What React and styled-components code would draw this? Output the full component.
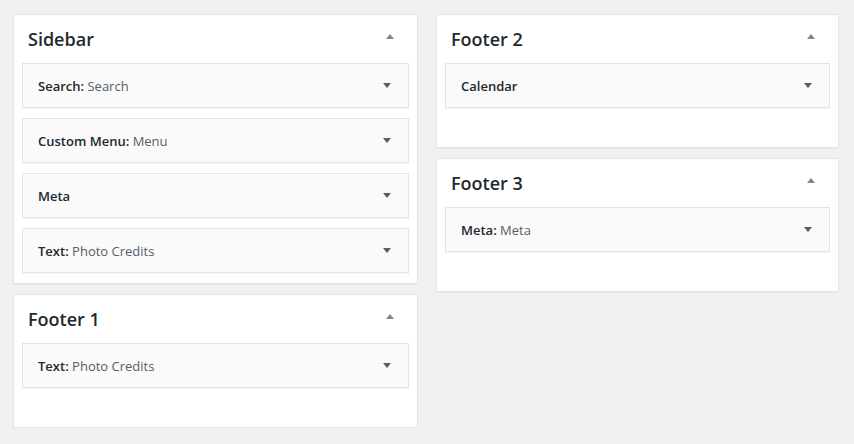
import styled, { createGlobalStyle } from "styled-components";

const GlobalStyle = createGlobalStyle`
	body {
		margin: 0;
		background: #f1f1f1;
		font-family: "Open Sans", "Liberation Sans", sans-serif;
		color: #23282d;
	}
`;

const Page = styled.div`
	display: grid;
	grid-template-columns: 405px 403px;
	column-gap: 18px;
	padding: 14px 0 0 13px;
	align-items: start;
`;

const Column = styled.div`
	display: flex;
	flex-direction: column;
	gap: 10px;
`;

const Panel = styled.section`
	background: #fff;
	border: 1px solid #e5e5e5;
	box-shadow: 0 1px 1px rgba(0, 0, 0, 0.04);
`;

const PanelHead = styled.div`
	display: flex;
	align-items: center;
	justify-content: space-between;
	height: 48px;
	padding: 0 23px 0 14px;
`;

const PanelTitle = styled.h2`
	margin: 0;
	font-size: 18px;
	font-weight: 600;
	line-height: 1;
`;

const Arrow = styled.span`
	width: 0;
	height: 0;
	border-left: 4px solid transparent;
	border-right: 4px solid transparent;
	${(p) =>
		p.$up
			? "border-bottom: 5px solid #82878c; margin-top: -6px;"
			: "border-top: 5px solid #555d66;"}
`;

const WidgetList = styled.div`
	display: flex;
	flex-direction: column;
	gap: 10px;
	padding: 0 8px 10px;
	min-height: 74px;
`;

const Widget = styled.div`
	display: flex;
	align-items: center;
	justify-content: space-between;
	height: 43px;
	padding: 0 17px 0 15px;
	background: #fafafa;
	border: 1px solid #e5e5e5;
	box-shadow: 0 1px 1px rgba(0, 0, 0, 0.04);
`;

const WidgetTitle = styled.span`
	font-size: 13px;
	font-weight: 600;
	color: #23282d;
`;

const WidgetSub = styled.span`
	font-weight: 400;
	color: #555d66;
`;

function Sidebar({ title, widgets }) {
	return (
		<Panel>
			<PanelHead>
				<PanelTitle>{title}</PanelTitle>
				<Arrow $up />
			</PanelHead>
			<WidgetList>
				{widgets.map(([name, sub], i) => (
					<Widget key={i}>
						<WidgetTitle>
							{name}
							{sub && (
								<>
									: <WidgetSub>{sub}</WidgetSub>
								</>
							)}
						</WidgetTitle>
						<Arrow />
					</Widget>
				))}
			</WidgetList>
		</Panel>
	);
}

export default function App() {
	return (
		<>
			<GlobalStyle />
			<Page>
				<Column>
					<Sidebar
						title="Sidebar"
						widgets={[
							["Search", "Search"],
							["Custom Menu", "Menu"],
							["Meta"],
							["Text", "Photo Credits"],
						]}
					/>
					<Sidebar title="Footer 1" widgets={[["Text", "Photo Credits"]]} />
				</Column>
				<Column>
					<Sidebar title="Footer 2" widgets={[["Calendar"]]} />
					<Sidebar title="Footer 3" widgets={[["Meta", "Meta"]]} />
				</Column>
			</Page>
		</>
	);
}
